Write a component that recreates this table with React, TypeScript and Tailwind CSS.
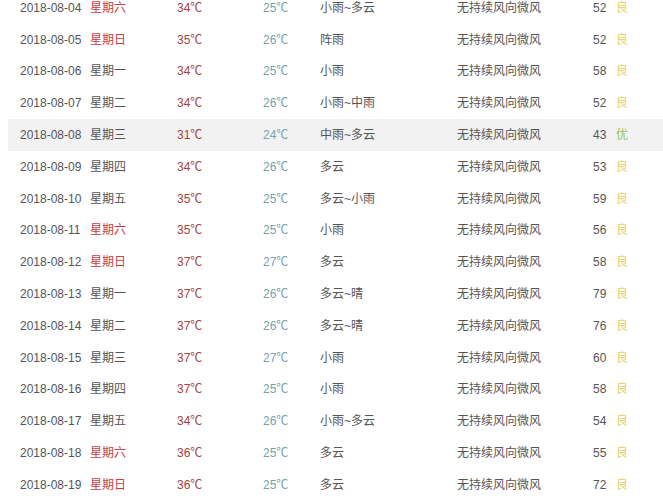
const rows: [string, string, number, number, string, number, string][] = [
  ['2018-08-04', '星期六', 34, 25, '小雨~多云', 52, '良'],
  ['2018-08-05', '星期日', 35, 26, '阵雨', 52, '良'],
  ['2018-08-06', '星期一', 34, 25, '小雨', 58, '良'],
  ['2018-08-07', '星期二', 34, 26, '小雨~中雨', 52, '良'],
  ['2018-08-08', '星期三', 31, 24, '中雨~多云', 43, '优'],
  ['2018-08-09', '星期四', 34, 26, '多云', 53, '良'],
  ['2018-08-10', '星期五', 35, 25, '多云~小雨', 59, '良'],
  ['2018-08-11', '星期六', 35, 25, '小雨', 56, '良'],
  ['2018-08-12', '星期日', 37, 27, '多云', 58, '良'],
  ['2018-08-13', '星期一', 37, 26, '多云~晴', 79, '良'],
  ['2018-08-14', '星期二', 37, 26, '多云~晴', 76, '良'],
  ['2018-08-15', '星期三', 37, 27, '小雨', 60, '良'],
  ['2018-08-16', '星期四', 37, 25, '小雨', 58, '良'],
  ['2018-08-17', '星期五', 34, 26, '小雨~多云', 54, '良'],
  ['2018-08-18', '星期六', 36, 25, '多云', 55, '良'],
  ['2018-08-19', '星期日', 36, 25, '多云', 72, '良'],
];

export default function App() {
  return (
    <div
      className="w-[663px] h-[500px] overflow-hidden bg-white text-[12px] text-[#555]"
      style={{ fontFamily: '"Liberation Sans", "Noto Sans CJK SC", sans-serif' }}
    >
      <div className="-mt-[8px]">
        {rows.map(([date, day, hi, lo, weather, aqi, q]) => {
          const weekend = day === '星期六' || day === '星期日';
          const hl = date === '2018-08-08';
          return (
            <div
              key={date}
              className={`ml-[8px] pl-[12px] h-[31.8px] grid grid-cols-[70px_87px_86px_57px_137px_136px_23px_1fr] items-center ${hl ? 'bg-[#f2f2f2]' : ''}`}
            >
              <span className="text-[#555]">{date}</span>
              <span className={weekend ? 'text-[#c4403f]' : 'text-[#555]'}>{day}</span>
              <span className="text-[#9f4540]">{hi}℃</span>
              <span className="text-[#76a0ab]">{lo}℃</span>
              <span>{weather}</span>
              <span>无持续风向微风</span>
              <span>{aqi}</span>
              <span className={q === '优' ? 'text-[#93c152]' : 'text-[#e6cf5e]'}>{q}</span>
            </div>
          );
        })}
      </div>
    </div>
  );
}
